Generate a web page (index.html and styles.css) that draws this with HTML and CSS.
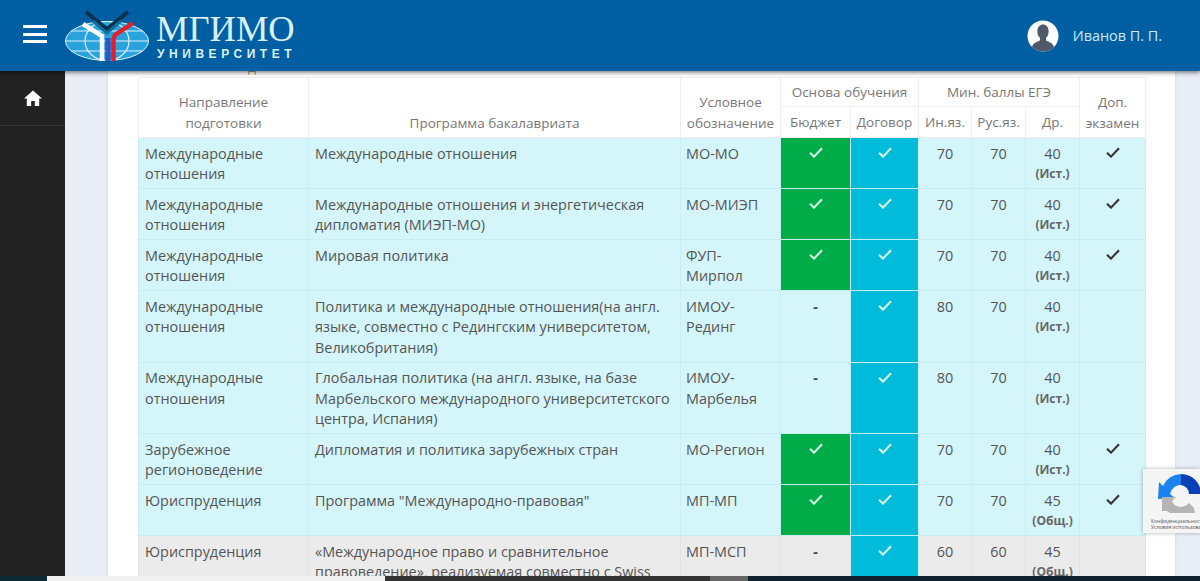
FILE: index.html
```html
<!DOCTYPE html>
<html lang="ru">
<head>
<meta charset="utf-8">
<title>МГИМО</title>
<link rel="stylesheet" href="styles.css">
</head>
<body>
<svg class="defs" width="0" height="0" aria-hidden="true"><symbol id="chk" viewBox="0 0 14 11"><path d="M1 5.800 5 9.600 13 1.200" fill="none" stroke="currentColor" stroke-width="2.100"/></symbol></svg>
<header class="topbar">
  <button class="burger" aria-label="Меню"><i></i><i></i><i></i></button>
  <svg class="globe" width="88" height="62" viewBox="0 0 88 62" aria-hidden="true">
    <ellipse cx="44" cy="35" rx="41.500" ry="19.500" fill="#2aa3dc" stroke="#dff3fb" stroke-width="1"/>
    <g fill="none" stroke="#d9f1fb" stroke-width="1.200">
      <path d="M3 35H85M8 25H80M8 45H80"/>
      <ellipse cx="44" cy="35" rx="22" ry="19.500"/>
    </g>
    <path d="M23 6 44 23 65 6" fill="none" stroke="#0c3050" stroke-width="4"/>
    <path d="M30 15 44 27 58 15" fill="none" stroke="#0f6f9e" stroke-width="3"/>
    <path d="M20 18 39 30V55" fill="none" stroke="#fff" stroke-width="4.500"/>
    <path d="M45 32V55" fill="none" stroke="#2b58c4" stroke-width="5.500"/>
    <path d="M70 17 52 29 50.500 33V55" fill="none" stroke="#e3202a" stroke-width="4.500"/>
  </svg>
  <div class="brand">
    <span class="brand-name">МГИМО</span>
    <span class="brand-sub">УНИВЕРСИТЕТ</span>
  </div>
  <div class="user">
    <svg class="avatar" width="32" height="32" viewBox="0 0 32 32" aria-hidden="true">
      <circle cx="16" cy="16" r="15.500" fill="#fff"/>
      <path d="M5 27c1-4 5-5 8-6.500v-2.500c-2-2-2.600-4-2.600-7 0-4 2.400-6.500 5.600-6.500s5.600 2.500 5.600 6.500c0 3-.6 5-2.600 7v2.500c3 1.500 7 2.500 8 6.500a15.500 15.500 0 0 1-22 0z" fill="#4f5a68"/>
    </svg>
    <span class="user-name">Иванов П. П.</span>
  </div>
</header>
<div class="layout">
  <aside class="sidebar">
    <div class="side-item">
      <svg width="18" height="16" viewBox="0 0 18 16" aria-hidden="true"><path d="M9 .5 0 8.500h2.800V16h4.400v-5h3.600v5h4.400V8.500H18z" fill="#fff"/></svg>
    </div>
  </aside>
  <main class="content">
    <section class="card">
      <div class="clipped">д</div>
      <table class="programs">
        <colgroup>
          <col class="c-dir"><col class="c-prog"><col class="c-code"><col class="c-bud"><col class="c-con"><col class="c-for"><col class="c-rus"><col class="c-oth"><col class="c-ex">
        </colgroup>
        <thead>
          <tr class="h1">
            <th rowspan="2" class="bottom">Направление<br>подготовки</th>
            <th rowspan="2" class="bottom">Программа бакалавриата</th>
            <th rowspan="2" class="bottom">Условное<br>обозначение</th>
            <th colspan="2">Основа обучения</th>
            <th colspan="3">Мин. баллы ЕГЭ</th>
            <th rowspan="2" class="bottom">Доп.<br>экзамен</th>
          </tr>
          <tr class="h2">
            <th>Бюджет</th><th>Договор</th><th>Ин.яз.</th><th>Рус.яз.</th><th>Др.</th>
          </tr>
        </thead>
        <tbody>
          <tr>
            <td>Международные отношения</td><td>Международные отношения</td><td>МО-МО</td>
            <td class="mark green"><svg class="chk"><use href="#chk"/></svg></td><td class="mark blue"><svg class="chk"><use href="#chk"/></svg></td>
            <td class="num">70</td><td class="num">70</td><td class="num">40<b>(Ист.)</b></td><td class="mark"><svg class="chk"><use href="#chk"/></svg></td>
          </tr>
          <tr>
            <td>Международные отношения</td><td>Международные отношения и энергетическая дипломатия (МИЭП-МО)</td><td>МО-МИЭП</td>
            <td class="mark green"><svg class="chk"><use href="#chk"/></svg></td><td class="mark blue"><svg class="chk"><use href="#chk"/></svg></td>
            <td class="num">70</td><td class="num">70</td><td class="num">40<b>(Ист.)</b></td><td class="mark"><svg class="chk"><use href="#chk"/></svg></td>
          </tr>
          <tr>
            <td>Международные отношения</td><td>Мировая политика</td><td>ФУП-Мирпол</td>
            <td class="mark green"><svg class="chk"><use href="#chk"/></svg></td><td class="mark blue"><svg class="chk"><use href="#chk"/></svg></td>
            <td class="num">70</td><td class="num">70</td><td class="num">40<b>(Ист.)</b></td><td class="mark"><svg class="chk"><use href="#chk"/></svg></td>
          </tr>
          <tr>
            <td>Международные отношения</td><td>Политика и международные отношения(на англ. языке, совместно с Редингским университетом, Великобритания)</td><td>ИМОУ-Рединг</td>
            <td class="mark dash">-</td><td class="mark blue"><svg class="chk"><use href="#chk"/></svg></td>
            <td class="num">80</td><td class="num">70</td><td class="num">40<b>(Ист.)</b></td><td></td>
          </tr>
          <tr>
            <td>Международные отношения</td><td>Глобальная политика (на англ. языке, на базе Марбельского международного университетского центра, Испания)</td><td>ИМОУ-Марбелья</td>
            <td class="mark dash">-</td><td class="mark blue"><svg class="chk"><use href="#chk"/></svg></td>
            <td class="num">80</td><td class="num">70</td><td class="num">40<b>(Ист.)</b></td><td></td>
          </tr>
          <tr>
            <td>Зарубежное регионоведение</td><td>Дипломатия и политика зарубежных стран</td><td>МО-Регион</td>
            <td class="mark green"><svg class="chk"><use href="#chk"/></svg></td><td class="mark blue"><svg class="chk"><use href="#chk"/></svg></td>
            <td class="num">70</td><td class="num">70</td><td class="num">40<b>(Ист.)</b></td><td class="mark"><svg class="chk"><use href="#chk"/></svg></td>
          </tr>
          <tr>
            <td>Юриспруденция</td><td>Программа "Международно-правовая"</td><td>МП-МП</td>
            <td class="mark green"><svg class="chk"><use href="#chk"/></svg></td><td class="mark blue"><svg class="chk"><use href="#chk"/></svg></td>
            <td class="num">70</td><td class="num">70</td><td class="num">45<b>(Общ.)</b></td><td class="mark"><svg class="chk"><use href="#chk"/></svg></td>
          </tr>
          <tr class="grey">
            <td>Юриспруденция</td><td>«Международное право и сравнительное правоведение», реализуемая совместно с Swiss</td><td>МП-МСП</td>
            <td class="mark dash">-</td><td class="mark blue"><svg class="chk"><use href="#chk"/></svg></td>
            <td class="num">60</td><td class="num">60</td><td class="num">45<b>(Общ.)</b></td><td></td>
          </tr>
        </tbody>
      </table>
    </section>
  </main>
</div>
<div class="recaptcha">
  <svg width="57" height="46" viewBox="0 0 57 46" aria-hidden="true">
    <path d="M36 2a20 20 0 0 1 20 20H44a9 9 0 0 0-8-9z" fill="#0b3fb5"/>
    <path d="M36 2A20 20 0 0 0 18 14l-4-4-1 17 17-1-5-4a11 11 0 0 1 11-9z" fill="#1a83f0"/>
    <path d="M17 25H31l-4 4a10 10 0 0 0 9 6 12 12 0 0 0 8-4l5 5 1 5H25a18 18 0 0 1-8-10z" fill="#b5b5b5"/>
    <path d="M17 25v14h8z" fill="#b5b5b5"/>
  </svg>
  <span class="rc-links">Конфиденциальность<br>Условия использования</span>
</div>
<div class="taskbar"><span class="t-a"></span><span class="t-b"></span><span class="t-c"></span><span class="t-d"></span><span class="t-e"></span></div>
</body>
</html>
```
FILE: styles.css
```css
* { box-sizing: border-box; }
html, body { margin: 0; height: 581px; overflow: hidden; }
body { font-family: "Open Sans", "Liberation Sans", sans-serif; color: #555; background: #e9eef6; position: relative; }
.defs { position: absolute; }

.topbar { position: relative; z-index: 3; height: 71px; background: #005ea3; display: flex; align-items: center; box-shadow: 0 2px 4px rgba(0,0,0,.45); padding-left: 23px; }
.burger { width: 24px; height: 18px; padding: 0; border: 0; background: none; display: flex; flex-direction: column; justify-content: space-between; margin-top: -3px; }
.burger i { display: block; height: 3px; background: #fff; }
.globe { margin-left: 16px; margin-top: 2px; flex: none; }
.brand { margin-left: 5px; display: flex; flex-direction: column; color: #d8f0f6; margin-top: 1px; }
.brand-name { font-family: "Liberation Serif", serif; font-size: 36.500px; line-height: 34px; }
.brand-sub { font-family: "Liberation Sans", sans-serif; font-weight: 700; font-size: 12px; line-height: 14px; letter-spacing: 4.550px; white-space: nowrap; margin-top: 1px; padding-left: 1px; }
.user { margin-left: auto; display: flex; align-items: center; padding-right: 38px; }
.avatar { display: block; }
.user-name { margin-left: 14px; font-size: 14.400px; color: #cdeaf6; }

.layout { display: flex; height: 510px; }
.sidebar { width: 65px; flex: none; background: #222; }
.side-item { height: 55px; border-bottom: 1px solid #363636; display: flex; align-items: center; justify-content: center; }
.content { flex: 1; padding-left: 43px; min-width: 0; }
.card { display: flow-root; width: 1067px; height: 100%; background: #fff; padding-left: 30px; box-shadow: 0 0 3px rgba(0,0,0,.12); }
.clipped { height: 20px; margin-top: -14px; line-height: 20px; font-size: 14px; color: #999; padding-left: 110px; overflow: hidden; }

.programs { width: 1007px; table-layout: fixed; border-collapse: collapse; font-size: 14.400px; line-height: 20.500px; }
.c-dir { width: 170px; } .c-prog { width: 372px; } .c-code { width: 100px; } .c-bud { width: 70px; } .c-con { width: 68px; }
.c-for { width: 53px; } .c-rus { width: 54px; } .c-oth { width: 54px; } .c-ex { width: 66px; }
th { font-weight: 400; font-size: 13.500px; color: #777; text-align: center; border: 1px solid #eeeeee; padding: 3px 0; white-space: nowrap; }
th.bottom { vertical-align: bottom; padding-bottom: 4px; }
.h1 th { height: 29px; }
.h2 th { height: 31px; }
td { border: 1px solid #c8edf2; padding: 5.500px 6px 3.500px; vertical-align: top; background: #d4f5f9; }
td:nth-child(3) { padding-left: 5px; }
.grey td { background: #ebebeb; border-color: #e2e2e2; }
.mark, .num { text-align: center; padding-left: 0; padding-right: 0; }
.num b { display: block; font-size: 12px; color: #666; }
.chk { display: block; width: 14px; height: 11px; margin: 3.500px auto 0; color: #333; }
td.green { background: #00ac47; border-color: #c8edf2; }
td.blue { background: #00bbda; border-color: #c8edf2; }
.green .chk, .blue .chk { color: #d6f7e8; }
.dash { font-weight: 700; color: #444; }

.recaptcha { position: absolute; z-index: 4; left: 1143px; top: 469px; width: 57px; height: 64px; background: #f5f5f5; box-shadow: 0 0 4px rgba(0,0,0,.3); overflow: hidden; padding-top: 3px; }
.recaptcha svg { display: block; margin-left: 2px; }
.rc-links { display: block; font-size: 5px; line-height: 6px; color: #555; white-space: nowrap; margin-left: 8px; }

.taskbar { position: absolute; z-index: 5; left: 0; right: 0; bottom: 0; height: 5px; display: flex; }
.t-a { width: 47px; background: #0d2a35; }
.t-b { width: 338px; background: #f0f0f0; }
.t-c { width: 325px; background: #333; }
.t-d { width: 38px; background: #666; }
.t-e { flex: 1; background: #10202f; }
```
